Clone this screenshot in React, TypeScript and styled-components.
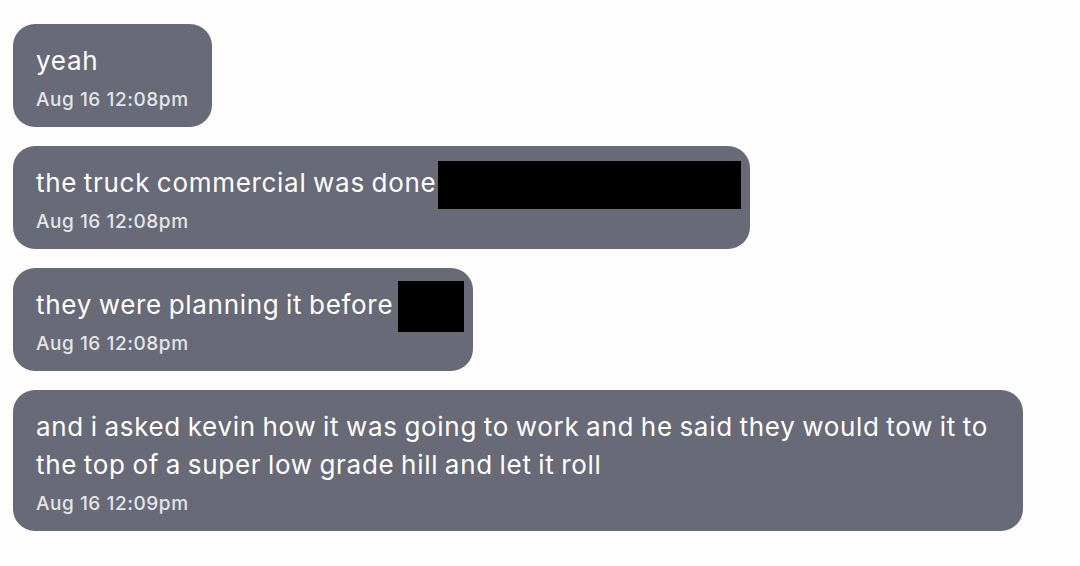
import React from 'react';
import styled, { createGlobalStyle } from 'styled-components';

const GlobalStyle = createGlobalStyle`
  html, body {
    margin: 0;
    padding: 0;
    background: #fdfdfd;
  }
`;

interface Message {
  text: string;
  time: string;
  redacted?: { width: number; height: number; gap: number };
}

const messages: Message[] = [
  { text: 'yeah', time: 'Aug 16 12:08pm' },
  { text: 'the truck commercial was done', time: 'Aug 16 12:08pm', redacted: { width: 303, height: 48, gap: 2 } },
  { text: 'they were planning it before', time: 'Aug 16 12:08pm', redacted: { width: 66, height: 51, gap: 5 } },
  {
    text: 'and i asked kevin how it was going to work and he said they would tow it to the top of a super low grade hill and let it roll',
    time: 'Aug 16 12:09pm',
  },
];

export default function App() {
  return (
    <>
      <GlobalStyle />
      <Thread>
        {messages.map((m, i) => (
          <Bubble key={i}>
            <Body>
              {m.text}
              {m.redacted ? (
                <Redacted $w={m.redacted.width} $h={m.redacted.height} $gap={m.redacted.gap} />
              ) : null}
            </Body>
            <Time>{m.time}</Time>
          </Bubble>
        ))}
      </Thread>
    </>
  );
}

const Thread = styled.div`
  display: flex;
  flex-direction: column;
  align-items: flex-start;
  gap: 19px;
  padding: 24px 13px;
  width: 1080px;
  height: 566px;
  box-sizing: border-box;
  font-family: Inter, 'Liberation Sans', sans-serif;
`;

const Bubble = styled.div`
  max-width: 1010px;
  box-sizing: border-box;
  padding: 18px 23px 15px 23px;
  background: #686a78;
  border-radius: 22px;
  color: #ffffff;
`;

const Body = styled.div`
  font-size: 26px;
  line-height: 38px;
  letter-spacing: 0.7px;
  word-spacing: -1.3px;
`;

const Redacted = styled.span<{ $w: number; $h: number; $gap: number }>`
  display: inline-block;
  vertical-align: middle;
  width: ${({ $w }) => $w}px;
  height: ${({ $h }) => $h}px;
  margin: ${({ $h }) => -($h - 24) / 2}px -14px ${({ $h }) => -($h - 24) / 2}px ${({ $gap }) => $gap}px;
  background: #000;
`;

const Time = styled.div`
  margin-top: 8px;
  font-size: 19px;
  line-height: 24px;
  font-weight: 500;
  letter-spacing: 0.55px;
  color: #e4e5ea;
`;
